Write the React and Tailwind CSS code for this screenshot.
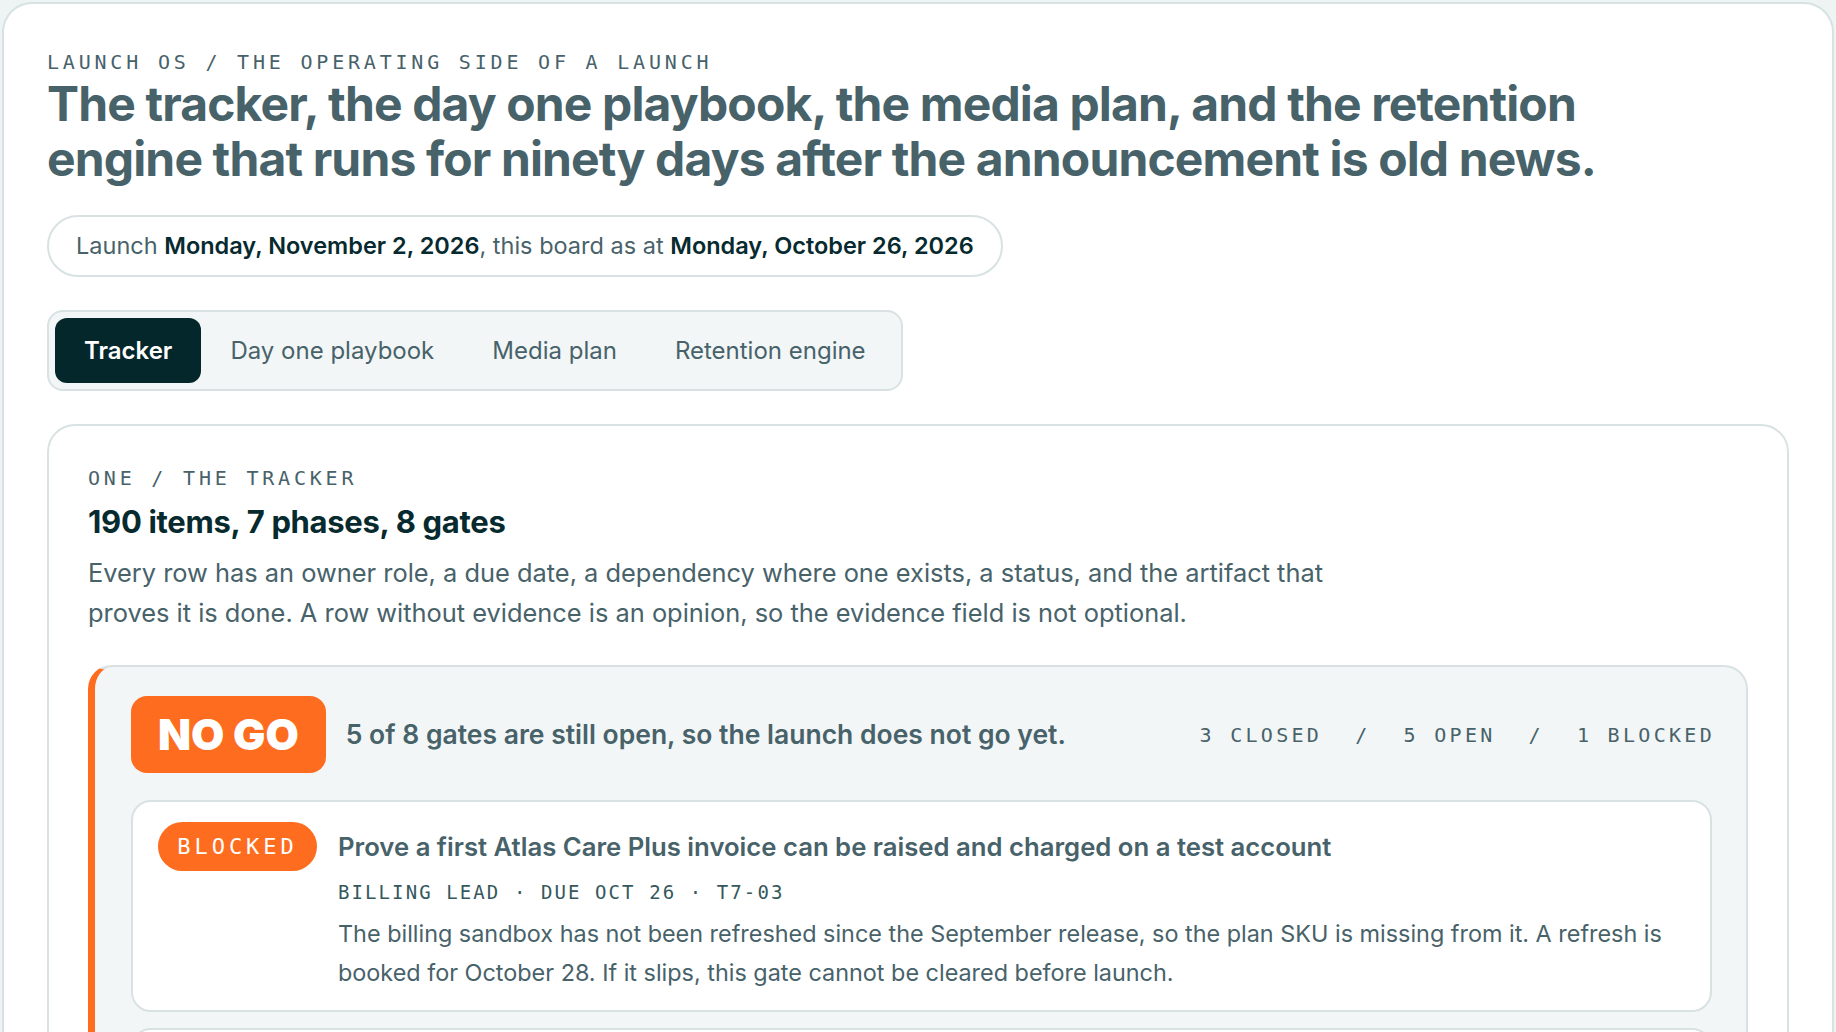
import React from 'react';

const sans = { fontFamily: 'Inter, "Noto Sans", sans-serif' };
const mono = { fontFamily: '"DejaVu Sans Mono", "Liberation Mono", monospace' };

const tabs = ['Tracker', 'Day one playbook', 'Media plan', 'Retention engine'];

const GateItem = ({ status, title, meta, body }) => (
  <div className="flex rounded-[20px] border-2 border-[#d8e2e3] bg-white pl-[25px] pr-[30px] pt-[20px] pb-[18px]">
    <div className="w-[159px] shrink-0">
      <span
        className="flex h-[49px] w-[159px] items-center justify-center rounded-full bg-[#fd6c1f] text-[22px] tracking-[0.18em] text-white"
        style={mono}
      >
        {status}
      </span>
    </div>
    <div className="ml-[21px] min-w-0">
      <h3 className="mt-[8px] text-[25.7px] font-semibold leading-[34px] text-[#48626a]">{title}</h3>
      <p className="mt-[14px] text-[19px] leading-[28px] tracking-[0.11em] text-[#35585d]" style={mono}>
        {meta}
      </p>
      <p className="mt-[8px] text-[23.4px] leading-[39px] text-[#48626a]">{body}</p>
    </div>
  </div>
);

export default function App() {
  return (
    <div className="min-h-screen bg-[#eef3f3] px-[2px] pt-[2px]" style={sans}>
      <div className="min-h-[1040px] rounded-t-[30px] border-2 border-b-0 border-[#d8e2e3] bg-white px-[43px] pt-[44px] pb-10">
        <p className="text-[20px] leading-[28px] tracking-[0.19em] text-[#48626a]" style={mono}>
          LAUNCH OS / THE OPERATING SIDE OF A LAUNCH
        </p>
        <h1 className="max-w-[1600px] text-[48px] font-bold leading-[55px] tracking-[-0.018em] text-[#48626a]">
          The tracker, the day one playbook, the media plan, and the retention engine that runs for ninety days after the announcement is old news.
        </h1>

        <div className="mt-[29px] inline-flex h-[62px] items-center rounded-full border-2 border-[#d8e2e3] px-[27px] text-[23.5px] text-[#48626a]">
          <span>
            Launch <b className="font-semibold text-[#072a2f]">Monday, November 2, 2026</b>, this board as at{' '}
            <b className="font-semibold text-[#072a2f]">Monday, October 26, 2026</b>
          </span>
        </div>

        <div>
          <div className="mt-[33px] inline-flex rounded-[16px] border-2 border-[#d8e2e3] bg-[#f2f6f6] p-[6px]">
            {tabs.map((t, i) => (
              <button
                key={t}
                className={
                  i === 0
                    ? 'h-[65px] rounded-[12px] bg-[#03272b] px-[29px] text-[24px] font-semibold text-white'
                    : 'h-[65px] rounded-[12px] px-[29px] text-[24px] text-[#48626a]'
                }
              >
                {t}
              </button>
            ))}
          </div>
        </div>

        {/* tracker section */}
        <div className="mt-[33px] rounded-[28px] border-2 border-[#d8e2e3] bg-white px-[39px] pt-[38px] pb-10">
          <p className="text-[20px] leading-[28px] tracking-[0.19em] text-[#48626a]" style={mono}>
            ONE / THE TRACKER
          </p>
          <h2 className="mt-[10px] text-[31px] font-bold leading-[40px] tracking-[-0.01em] text-[#072a2f]">
            190 items, 7 phases, 8 gates
          </h2>
          <p className="mt-[11px] max-w-[1300px] text-[25.4px] leading-[40px] text-[#48626a]">
            Every row has an owner role, a due date, a dependency where one exists, a status, and the artifact that proves it is done. A row without evidence is an opinion, so the evidence field is not optional.
          </p>

          <div className="mt-[32px] rounded-[24px] border-2 border-l-[7px] border-[#d8e2e3] border-l-[#fd6c1f] bg-[#f2f6f6] pl-[36px] pr-[34px] pt-[29px] pb-8">
            <div className="flex items-center">
              <span className="flex h-[77px] items-center rounded-[16px] bg-[#fd6c1f] px-[27px] text-[43px] font-black text-white">
                NO GO
              </span>
              <p className="ml-[20px] text-[26.5px] font-semibold text-[#48626a]">
                5 of 8 gates are still open, so the launch does not go yet.
              </p>
              <div className="ml-auto mr-[-3px] flex items-center gap-[33px] text-[20px] tracking-[0.165em] text-[#48626a]" style={mono}>
                <span>3 CLOSED</span>
                <span>/</span>
                <span>5 OPEN</span>
                <span>/</span>
                <span>1 BLOCKED</span>
              </div>
            </div>

            <div className="mt-[27px] flex flex-col gap-[16px]">
              <GateItem
                status="BLOCKED"
                title="Prove a first Atlas Care Plus invoice can be raised and charged on a test account"
                meta="BILLING LEAD · DUE OCT 26 · T7-03"
                body="The billing sandbox has not been refreshed since the September release, so the plan SKU is missing from it. A refresh is booked for October 28. If it slips, this gate cannot be cleared before launch."
              />
              <GateItem
                status="OPEN"
                title="Support macros for Atlas Care Plus are live in the help desk"
                meta="SUPPORT LEAD · DUE OCT 29 · T7-05"
                body="Drafts are written and reviewed. They go live once the billing gate clears."
              />
            </div>
          </div>
        </div>
      </div>
    </div>
  );
}
